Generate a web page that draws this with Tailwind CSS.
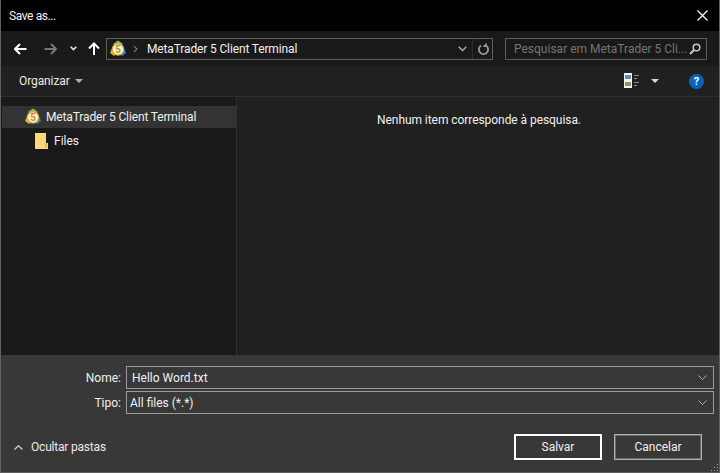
<!DOCTYPE html>
<html lang="en">
<head>
  <meta charset="UTF-8" />
  <title>Save as...</title>
  <script src="https://cdn.jsdelivr.net/npm/@tailwindcss/browser@4"></script>
</head>
<body class="bg-black overflow-hidden">
  <div class="w-[720px] h-[473px] flex flex-col border border-t-0 border-[#5f5f5f] bg-[#191919] text-white text-[12px] font-['Roboto',sans-serif] relative">
    <!-- title -->
    <div class="h-[31px] bg-black flex items-center justify-between pl-[8px] pr-[11px] shrink-0">
      <span class="text-[#f0f0f0] tracking-[-0.4px]">Save as...</span>
      <svg width="11" height="11" viewBox="0 0 11 11"><path d="M0.5 0.5L10.5 10.5M10.5 0.5L0.5 10.5" stroke="#fff" stroke-width="1.2"/></svg>
    </div>
    <!-- nav -->
    <div class="h-[35px] bg-[#191919] flex items-center shrink-0 pl-[13px] pr-[12px]">
      <svg width="13" height="12" viewBox="0 0 13 12" fill="none"><path d="M12.5 6H1.5M6 1L1 6L6 11" stroke="#fff" stroke-width="2"/></svg>
      <svg class="ml-[17px]" width="13" height="12" viewBox="0 0 13 12" fill="none"><path d="M0.5 6H11.5M7 1L12 6L7 11" stroke="#777" stroke-width="2"/></svg>
      <svg class="ml-[13px]" width="7" height="5" viewBox="0 0 7 5" fill="none"><path d="M0.7 0.7L3.5 3.5L6.3 0.7" stroke="#e8e8e8" stroke-width="1.6"/></svg>
      <svg class="ml-[11px]" width="12" height="13" viewBox="0 0 12 13" fill="none"><path d="M6 13V2M1 6.500L6 1.500L11 6.500" stroke="#fff" stroke-width="2"/></svg>
      <div class="ml-[6px] w-[387px] h-[22px] border border-[#5c5c5c] flex items-center">
        <svg class="ml-[2px]" width="18" height="18" viewBox="0 0 18 18"><path d="M9 0.500L14 4L9 8L4 4Z" fill="#8bc34a"/><path d="M1 13L4.500 4.500L9 12L5 16Z" fill="#e0b020"/><path d="M17 13L13.500 4.500L9 12L13 16Z" fill="#2f80d0"/><circle cx="9" cy="9.500" r="6.200" fill="#d9a93a"/><circle cx="9" cy="9.500" r="5" fill="#f8f4e8"/><text x="9" y="13" text-anchor="middle" font-size="10" font-weight="700" fill="#c98a10" font-family="Roboto">5</text></svg>
        <svg class="ml-[6px]" width="5" height="8" viewBox="0 0 5 8" fill="none"><path d="M0.8 0.800L4 4L0.800 7.200" stroke="#777" stroke-width="1.2"/></svg>
        <span class="ml-[9px] text-[#f0f0f0] whitespace-nowrap tracking-[-0.14px]">MetaTrader 5 Client Terminal</span>
        <svg class="ml-auto" width="9" height="6" viewBox="0 0 9 6" fill="none"><path d="M0.7 0.700L4.500 4.500L8.300 0.700" stroke="#a8a8a8" stroke-width="1.5"/></svg>
        <div class="ml-[5px] w-px h-[20px] bg-[#2c2c2c]"></div>
        <svg class="ml-[5px] mr-[3px]" width="11" height="12" viewBox="0 0 11 12" fill="none"><path d="M3 2.600A4.600 4.600 0 1 0 8 2.600M8 0.500V3.200H5.300" stroke="#9a9a9a" stroke-width="1.8"/></svg>
      </div>
      <div class="ml-[12px] w-[202px] h-[22px] border border-[#5c5c5c] flex items-center pl-[8px] pr-[5px]">
        <span class="text-[#757575] whitespace-nowrap">Pesquisar em MetaTrader 5 Cli...</span>
        <svg class="ml-auto" width="12" height="12" viewBox="0 0 12 12" fill="none"><circle cx="7.500" cy="4.500" r="3.300" stroke="#c8c8c8" stroke-width="1.500"/><path d="M5 7L1 11" stroke="#c8c8c8" stroke-width="2"/></svg>
      </div>
    </div>
    <!-- toolbar -->
    <div class="h-[31px] bg-[#202020] border-b border-[#2e2e2e] flex items-center shrink-0 pl-[18px] pr-[15px]">
      <span class="text-[#e8e8e8] tracking-[-0.1px]">Organizar</span>
      <svg class="ml-[5px]" width="8" height="4" viewBox="0 0 8 4"><path d="M0 0H8L4 4Z" fill="#b0b0b0"/></svg>
      <svg class="ml-auto" width="16" height="18" viewBox="0 0 16 18"><rect x="0" y="1" width="8" height="15" fill="#f2f2f2"/><rect x="1" y="3" width="6" height="4" fill="#5b8fb0"/><rect x="1" y="10" width="6" height="4" fill="#9a8f5a"/><path d="M10 3.500H15M10 6.500H13M10 10.500H15M10 13.500H13" stroke="#8a8a8a"/></svg>
      <svg class="ml-[11px]" width="8" height="4" viewBox="0 0 8 4"><path d="M0 0H8L4 4Z" fill="#d8d8d8"/></svg>
      <div class="ml-[30px] w-[15px] h-[15px] rounded-full bg-[#0b62bd] flex items-center justify-center text-[11px] font-bold leading-none">?</div>
    </div>
    <!-- main -->
    <div class="flex-1 flex min-h-0">
      <div class="w-[236px] bg-[#191919] border-r border-[#2e2e2e] pt-[9px] shrink-0">
        <div class="h-[22px] bg-[#333333] flex items-center pl-[22px] mx-[1px] w-[234px]">
          <svg width="18" height="18" viewBox="0 0 18 18"><path d="M9 0.500L14 4L9 8L4 4Z" fill="#8bc34a"/><path d="M1 13L4.500 4.500L9 12L5 16Z" fill="#e0b020"/><path d="M17 13L13.500 4.500L9 12L13 16Z" fill="#2f80d0"/><circle cx="9" cy="9.500" r="6.200" fill="#d9a93a"/><circle cx="9" cy="9.500" r="5" fill="#f8f4e8"/><text x="9" y="13" text-anchor="middle" font-size="10" font-weight="700" fill="#c98a10" font-family="Roboto">5</text></svg>
          <span class="ml-[4px] text-[#f0f0f0] whitespace-nowrap tracking-[-0.14px]">MetaTrader 5 Client Terminal</span>
        </div>
        <div class="h-[26px] flex items-center pl-[34px]">
          <svg width="13" height="16" viewBox="0 0 13 16"><path d="M0 0H11V10H13V16H0Z" fill="#fbd978"/><path d="M10 10H12V15H10Z" fill="#e8b94a"/></svg>
          <span class="ml-[6px] text-[#f0f0f0]">Files</span>
        </div>
      </div>
      <div class="flex-1 bg-[#202020] pt-[14px] text-center">
        <span class="text-[#f0f0f0] tracking-[-0.06px] relative left-[1px]">Nenhum item corresponde à pesquisa.</span>
      </div>
    </div>
    <!-- footer -->
    <div class="h-[117px] bg-[#383838] shrink-0 flex flex-col pr-[5px] relative">
      <div class="flex items-center h-[23px] mt-[11px] text-[#f0f0f0]">
        <span class="w-[120px] text-right">Nome:</span>
        <div class="ml-[5px] flex-1 h-[23px] border border-[#9a9a9a] flex items-center pl-[5px] pr-[6px]">
          <span>Hello Word.txt</span>
          <svg class="ml-auto" width="9" height="5" viewBox="0 0 9 5" fill="none"><path d="M0.500 0.500L4.500 4.500L8.500 0.500" stroke="#b0b0b0"/></svg>
        </div>
      </div>
      <div class="flex items-center h-[23px] mt-[2px] text-[#f0f0f0]">
        <span class="w-[120px] text-right">Tipo:</span>
        <div class="ml-[5px] flex-1 h-[23px] border border-[#9a9a9a] flex items-center pl-[3px] pr-[6px]">
          <span>All files (*.*)</span>
          <svg class="ml-auto" width="9" height="5" viewBox="0 0 9 5" fill="none"><path d="M0.500 0.500L4.500 4.500L8.500 0.500" stroke="#b0b0b0"/></svg>
        </div>
      </div>
      <div class="flex items-center mt-[20px] pl-[13px] pr-[12px] h-[26px]">
        <svg width="9" height="5" viewBox="0 0 9 5" fill="none"><path d="M0.500 4.500L4.500 0.800L8.500 4.500" stroke="#c8c8c8" stroke-width="1.400"/></svg>
        <span class="ml-[8px] text-[#e8e8e8] tracking-[-0.2px]">Ocultar pastas</span>
        <button class="ml-auto w-[88px] h-[26px] border-2 border-white text-[#f0f0f0]">Salvar</button>
        <button class="ml-[12px] w-[88px] h-[26px] border border-[#b0b0b0] outline outline-1 -outline-offset-2 outline-[#6a6a6a] text-[#f0f0f0]">Cancelar</button>
      </div>
      <svg class="absolute right-0 bottom-0" width="9" height="9" viewBox="0 0 9 9"><path d="M7 1h1v1h-1zM4 4h1v1h-1zM7 4h1v1h-1zM1 7h1v1h-1zM4 7h1v1h-1zM7 7h1v1h-1z" fill="#a8a8a8"/></svg>
    </div>
  </div>
</body>
</html>
